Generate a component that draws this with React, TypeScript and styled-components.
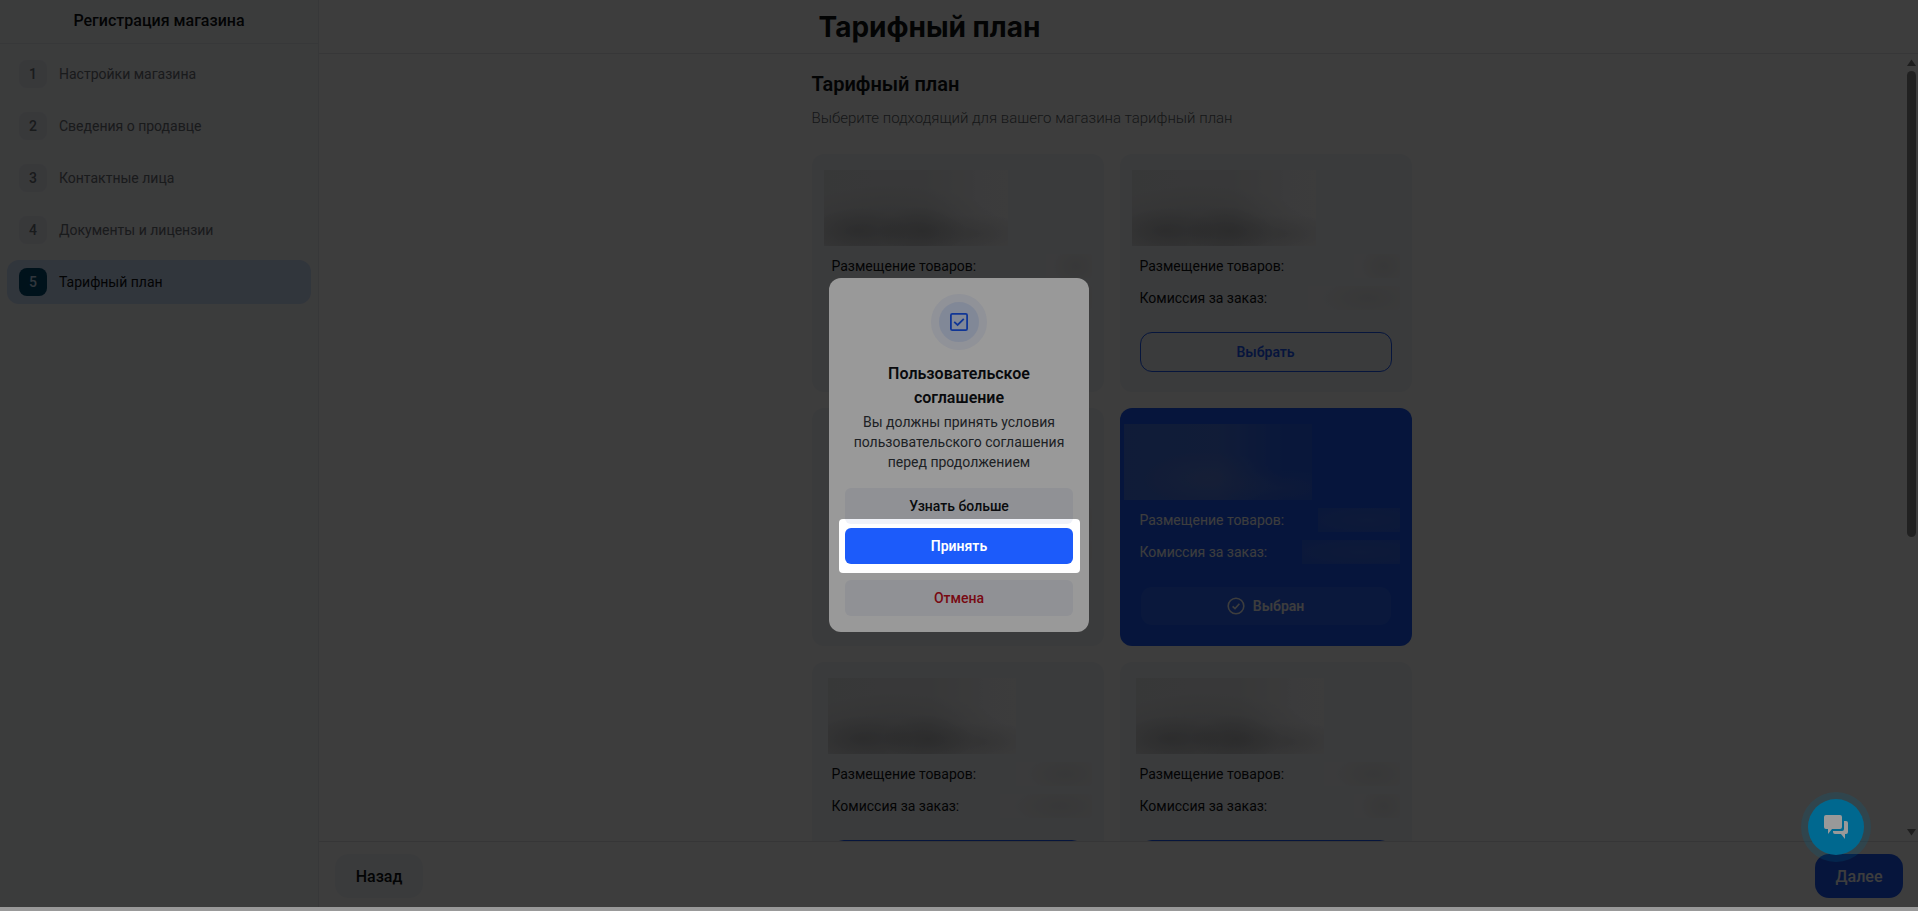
import React from "react";
import styled, { createGlobalStyle, css } from "styled-components";

const GlobalStyle = createGlobalStyle`
  *, *::before, *::after { box-sizing: border-box; }
  body {
    margin: 0;
    background: #ffffff;
    color: #0f1216;
    font-family: Roboto, Inter, "Noto Sans", "Liberation Sans", sans-serif;
    font-size: 14px;
    line-height: 20px;
  }
  h1, h2, h3, p, ol, dl, dt, dd { margin: 0; padding: 0; }
  button { font-family: inherit; cursor: pointer; }
`;

const Shell = styled.div`
  display: flex;
  height: calc(100vh - 4px);
  overflow: hidden;
`;

const Sidebar = styled.aside`
  flex: 0 0 319px;
  background: #f7f9fd;
  border-right: 1px solid #e8eaee;
`;

const SidebarTitle = styled.h2`
  padding: 9px 0 10px;
  border-bottom: 1px solid #e8eaee;
  font-size: 16px;
  line-height: 24px;
  font-weight: 500;
  text-align: center;
`;

const Steps = styled.ol`
  display: flex;
  flex-direction: column;
  gap: 8px;
  padding: 8px 7px;
  list-style: none;
`;

const Step = styled.li<{ $active?: boolean }>`
  display: flex;
  align-items: center;
  gap: 12px;
  padding: 8px 12px;
  border-radius: 12px;
  color: ${(p) => (p.$active ? "#0f1216" : "#6d7076")};
  background: ${(p) => (p.$active ? "#cde0fc" : "transparent")};
`;

const StepNumber = styled.span<{ $active?: boolean }>`
  display: flex;
  align-items: center;
  justify-content: center;
  width: 28px;
  height: 28px;
  border-radius: 8px;
  font-weight: 500;
  color: ${(p) => (p.$active ? "#cde0fc" : "#6d7076")};
  background: ${(p) => (p.$active ? "#004b70" : "#eceef6")};
`;

const Main = styled.main`
  flex: 1;
  min-width: 0;
  display: flex;
  flex-direction: column;
`;

const PageHeader = styled.header`
  padding: 9px 0 8px;
  border-bottom: 1px solid #e6e6ea;
`;

const Column = styled.div`
  width: 100%;
  max-width: 600px;
  margin: 0 auto;
`;

const PageTitle = styled.h1`
  font-family: Inter, Roboto, sans-serif;
  font-size: 28px;
  line-height: 36px;
  font-weight: 700;
`;

const Scroller = styled.div`
  flex: 1;
  min-height: 0;
  display: flex;
`;

const Content = styled.div`
  flex: 1;
  min-width: 0;
  overflow: hidden;
`;

const Section = styled(Column)`
  padding-top: 16px;
`;

const SectionTitle = styled.h2`
  font-size: 20px;
  line-height: 28px;
  font-weight: 600;
`;

const SectionHint = styled.p`
  margin: 8px 0 24px;
  font-size: 15px;
  line-height: 24px;
  font-weight: 300;
  color: #5b5f66;
`;

const Plans = styled.div`
  display: grid;
  grid-template-columns: 1fr 1fr;
  gap: 16px;
`;

const PlanCard = styled.article<{ $selected?: boolean }>`
  height: 238px;
  padding-top: 16px;
  border-radius: 12px;
  color: ${(p) => (p.$selected ? "#ffffff" : "#0f1216")};
  background: ${(p) => (p.$selected ? "#1c5bfa" : "#f5f7fb")};
`;

const HiddenSummary = styled.div<{ $selected?: boolean; $inset: number; $width: number }>`
  width: ${(p) => p.$width}px;
  height: 76px;
  margin-left: ${(p) => p.$inset}px;
  ${(p) =>
    p.$selected
      ? css`
          background:
            radial-gradient(ellipse 36% 36% at 45% 72%, rgba(190, 190, 190, 0.16), transparent),
            radial-gradient(ellipse 30% 24% at 84% 84%, rgba(190, 190, 190, 0.12), transparent),
            linear-gradient(90deg, rgba(190, 190, 190, 0.26), rgba(190, 190, 190, 0.28) 50%, rgba(190, 190, 190, 0.08) 85%);
        `
      : css`
          background:
            radial-gradient(ellipse 24% 32% at 53% 80%, rgba(60, 60, 64, 0.2), transparent),
            radial-gradient(ellipse 28% 30% at 18% 80%, rgba(60, 60, 64, 0.18), transparent),
            radial-gradient(ellipse 30% 26% at 82% 84%, rgba(60, 60, 64, 0.12), transparent),
            radial-gradient(ellipse 60% 60% at 38% 80%, rgba(90, 90, 94, 0.18), transparent),
            linear-gradient(90deg, #e9eaec, #ebecee 55%, #f8f8fa 85%, #f9f9fb);
        `}
`;

const Facts = styled.dl`
  display: flex;
  flex-direction: column;
  gap: 8px;
  padding: 8px 12px 0 20px;
`;

const Fact = styled.div`
  display: flex;
  justify-content: space-between;
  height: 24px;
  line-height: 24px;
`;

const HiddenValue = styled.dd<{ $selected?: boolean; $width: number }>`
  width: ${(p) => p.$width}px;
  background: ${(p) =>
    p.$selected
      ? "radial-gradient(ellipse at 60% 50%, rgba(190, 190, 190, 0.2), rgba(190, 190, 190, 0.1))"
      : "radial-gradient(ellipse 50% 80% at 65% 50%, #e9eaec, #f7f8fa)"};
`;

const PlanAction = styled.div`
  padding: 22px 20px 0;
`;

const PlanButton = styled.button<{ $selected?: boolean }>`
  display: flex;
  align-items: center;
  justify-content: center;
  gap: 8px;
  width: 100%;
  height: 40px;
  border: 1px solid ${(p) => (p.$selected ? "transparent" : "#1c5bfa")};
  border-radius: 12px;
  font-size: 14px;
  font-weight: 600;
  color: ${(p) => (p.$selected ? "#ffffff" : "#1c5bfa")};
  background: ${(p) => (p.$selected ? "rgba(255, 255, 255, 0.07)" : "transparent")};
  background-clip: padding-box;
`;

const ScrollTrack = styled.div`
  display: flex;
  flex-direction: column;
  align-items: center;
  gap: 5px;
  width: 14px;
  padding: 5px 0;
`;

const ScrollThumb = styled.div`
  flex: 0 0 60%;
  width: 9px;
  margin-bottom: auto;
  border-radius: 5px;
  background: #8b8b8b;
`;

const Footer = styled.footer`
  display: flex;
  justify-content: space-between;
  padding: 12px 15px 9px 16px;
  border-top: 1px solid #e0e2e8;
`;

const FooterButton = styled.button<{ $primary?: boolean }>`
  width: 88px;
  height: 44px;
  border: 0;
  border-radius: 14px;
  font-size: 16px;
  font-weight: 500;
  color: ${(p) => (p.$primary ? "#ffffff" : "#0f1216")};
  background: ${(p) => (p.$primary ? "#1c5bfa" : "#f5f7fb")};
`;

const Backdrop = styled.div`
  position: fixed;
  inset: 0 0 4px;
  z-index: 10;
  background: rgba(0, 0, 0, 0.6);
`;

const ChatButton = styled.button`
  position: fixed;
  right: 54px;
  bottom: 56px;
  z-index: 20;
  display: flex;
  align-items: center;
  justify-content: center;
  width: 56px;
  height: 56px;
  padding: 0;
  border: 0;
  border-radius: 50%;
  color: #ffffff;
  background: #00aeef;
  box-shadow: 0 0 0 7px rgba(0, 174, 239, 0.2);
`;

const DialogLayer = styled.div`
  position: fixed;
  inset: 0 0 1px;
  z-index: 30;
  display: flex;
  align-items: center;
  justify-content: center;
`;

const Dialog = styled.section`
  display: flex;
  flex-direction: column;
  align-items: center;
  width: 260px;
  padding: 16px;
  border-radius: 12px;
  text-align: center;
  background: #ffffff;
`;

const DialogIcon = styled.div`
  display: flex;
  align-items: center;
  justify-content: center;
  width: 56px;
  height: 56px;
  border: 8px solid #f0f3fd;
  border-radius: 50%;
  color: #1c5bfa;
  background: #d8e3fc;
`;

const DialogTitle = styled.h3`
  margin: 12px 0 2px;
  font-size: 16px;
  line-height: 24px;
  font-weight: 600;
`;

const DialogText = styled.p`
  color: #33373d;
`;

const DialogActions = styled.div`
  display: flex;
  flex-direction: column;
  gap: 4px;
  width: 100%;
  padding-top: 16px;
`;

const DialogButton = styled.button<{ $tone?: "primary" | "danger" }>`
  height: 36px;
  width: 100%;
  border: 0;
  border-radius: 6px;
  font-size: 14px;
  font-weight: ${(p) => (p.$tone === "primary" ? 600 : 500)};
  color: ${(p) => (p.$tone === "primary" ? "#ffffff" : p.$tone === "danger" ? "#c8101e" : "#0f1216")};
  background: ${(p) => (p.$tone === "primary" ? "#1c5bfa" : "#f0f2f8")};
`;

const Spotlight = styled.div`
  position: relative;
  margin-bottom: 12px;

  &::after {
    content: "";
    position: absolute;
    inset: -9px -7px -9px -6px;
    border-radius: 4px;
    box-shadow: 0 0 0 9999px rgba(0, 0, 0, 0.4);
    pointer-events: none;
  }
`;

const steps = [
  "Настройки магазина",
  "Сведения о продавце",
  "Контактные лица",
  "Документы и лицензии",
  "Тарифный план",
];

const plans = [
  { inset: 12, width: 184, values: [46, 80] },
  { inset: 12, width: 184, values: [46, 92] },
  { inset: 20, width: 184, values: [46, 80] },
  { inset: 4, width: 188, values: [82, 98], selected: true },
  { inset: 16, width: 188, values: [76, 92] },
  { inset: 16, width: 188, values: [76, 46] },
];

const ScrollArrow = ({ up }: { up?: boolean }) => (
  <svg width="9" height="7" viewBox="0 0 9 7" fill="#7d7d7d">
    <path d={up ? "M4.5 0.5 9 7H0z" : "M0 0h9L4.5 6.5z"} />
  </svg>
);

const CheckCircle = () => (
  <svg width="18" height="18" viewBox="0 0 18 18" fill="none" stroke="currentColor" strokeWidth="1.6">
    <circle cx="9" cy="9" r="7.8" />
    <path d="M5.6 9.3 8 11.6l4.4-4.8" />
  </svg>
);

const CheckBoxIcon = () => (
  <svg width="18" height="18" viewBox="0 0 18 18" fill="none" stroke="currentColor" strokeWidth="1.8">
    <rect x="0.9" y="0.9" width="16.2" height="16.2" rx="1.4" />
    <path d="M4.2 8.8 7.6 12 13.8 5.8" />
  </svg>
);

const ChatIcon = () => (
  <svg width="26" height="26" viewBox="0 0 26 26" fill="currentColor">
    <path d="M3 1h14a2 2 0 0 1 2 2v10a2 2 0 0 1-2 2H9l-4 5v-5H3a2 2 0 0 1-2-2V3a2 2 0 0 1 2-2z" />
    <path d="M21 7h2a2 2 0 0 1 2 2v9a2 2 0 0 1-2 2h-1v5l-4-5h-6a2 2 0 0 1-2-2v-1h9a2 2 0 0 0 2-2z" />
  </svg>
);

export default function App() {
  return (
    <>
      <GlobalStyle />
      <Shell>
        <Sidebar>
          <SidebarTitle>Регистрация магазина</SidebarTitle>
          <Steps>
            {steps.map((label, i) => (
              <Step key={label} $active={i === 4}>
                <StepNumber $active={i === 4}>{i + 1}</StepNumber>
                {label}
              </Step>
            ))}
          </Steps>
        </Sidebar>
        <Main>
          <PageHeader>
            <Column>
              <PageTitle>Тарифный план</PageTitle>
            </Column>
          </PageHeader>
          <Scroller>
            <Content>
              <Section>
                <SectionTitle>Тарифный план</SectionTitle>
                <SectionHint>Выберите подходящий для вашего магазина тарифный план</SectionHint>
                <Plans>
                  {plans.map((plan, i) => (
                    <PlanCard key={i} $selected={plan.selected}>
                      <HiddenSummary $selected={plan.selected} $inset={plan.inset} $width={plan.width} />
                      <Facts>
                        <Fact>
                          <dt>Размещение товаров:</dt>
                          <HiddenValue $selected={plan.selected} $width={plan.values[0]} />
                        </Fact>
                        <Fact>
                          <dt>Комиссия за заказ:</dt>
                          <HiddenValue $selected={plan.selected} $width={plan.values[1]} />
                        </Fact>
                      </Facts>
                      <PlanAction>
                        <PlanButton type="button" $selected={plan.selected}>
                          {plan.selected && <CheckCircle />}
                          {plan.selected ? "Выбран" : "Выбрать"}
                        </PlanButton>
                      </PlanAction>
                    </PlanCard>
                  ))}
                </Plans>
              </Section>
            </Content>
            <ScrollTrack aria-hidden="true">
              <ScrollArrow up />
              <ScrollThumb />
              <ScrollArrow />
            </ScrollTrack>
          </Scroller>
          <Footer>
            <FooterButton type="button">Назад</FooterButton>
            <FooterButton type="button" $primary>
              Далее
            </FooterButton>
          </Footer>
        </Main>
      </Shell>
      <Backdrop />
      <ChatButton type="button" aria-label="Чат">
        <ChatIcon />
      </ChatButton>
      <DialogLayer>
        <Dialog role="dialog" aria-modal="true" aria-labelledby="agreement-title">
          <DialogIcon>
            <CheckBoxIcon />
          </DialogIcon>
          <DialogTitle id="agreement-title">Пользовательское соглашение</DialogTitle>
          <DialogText>Вы должны принять условия пользовательского соглашения перед продолжением</DialogText>
          <DialogActions>
            <DialogButton type="button">Узнать больше</DialogButton>
            <Spotlight>
              <DialogButton type="button" $tone="primary">
                Принять
              </DialogButton>
            </Spotlight>
            <DialogButton type="button" $tone="danger">
              Отмена
            </DialogButton>
          </DialogActions>
        </Dialog>
      </DialogLayer>
    </>
  );
}
